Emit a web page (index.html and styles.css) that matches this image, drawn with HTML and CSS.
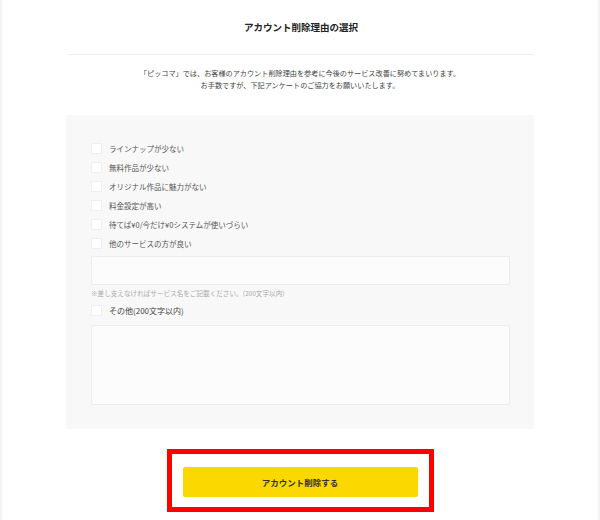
FILE: index.html
```html
<!DOCTYPE html>
<html lang="ja">
<head>
<meta charset="utf-8">
<title>アカウント削除理由の選択</title>
<link rel="stylesheet" href="styles.css">
</head>
<body>
<div class="page">
  <div class="container">
    <header class="header">
      <h1 class="title">アカウント削除理由の選択</h1>
    </header>
    <div class="desc">
      <p>「ピッコマ」では、お客様のアカウント削除理由を参考に今後のサービス改善に努めてまいります。</p>
      <p>お手数ですが、下記アンケートのご協力をお願いいたします。</p>
    </div>
    <form class="panel">
      <label class="row"><span class="box"></span><span class="label">ラインナップが少ない</span></label>
      <label class="row"><span class="box"></span><span class="label">無料作品が少ない</span></label>
      <label class="row"><span class="box"></span><span class="label">オリジナル作品に魅力がない</span></label>
      <label class="row"><span class="box"></span><span class="label">料金設定が高い</span></label>
      <label class="row"><span class="box"></span><span class="label">待てば¥0/今だけ¥0システムが使いづらい</span></label>
      <label class="row"><span class="box"></span><span class="label">他のサービスの方が良い</span></label>
      <div class="input"></div>
      <p class="note">※差し支えなければサービス名をご記載ください。(200文字以内)</p>
      <label class="row row-other"><span class="box"></span><span class="label label-other">その他(200文字以内)</span></label>
      <div class="textarea"></div>
    </form>
    <div class="action">
      <div class="highlight">
        <button type="button" class="btn">アカウント削除する</button>
      </div>
    </div>
  </div>
</div>
</body>
</html>
```

FILE: styles.css
```css
* { box-sizing: border-box; }
html, body { margin: 0; padding: 0; background: #fff; }
body {
  font-family: "Noto Sans CJK JP", "Noto Sans", sans-serif;
  color: #333;
}
.page {
  min-height: 520px;
  border-left: 2px solid #f3f3f3;
  border-right: 2px solid #f3f3f3;
}
.container {
  width: 468px;
  margin: 0 auto;
  display: flex;
  flex-direction: column;
}
.header {
  padding: 20px 0 20px;
  border-bottom: 1px solid #eeeeee;
  margin-left: 2px;
}
.title {
  margin: 0;
  font-size: 9.5px;
  line-height: 14px;
  font-weight: 700;
  text-align: center;
  color: #222;
}
.desc {
  margin-top: 12px;
  text-align: center;
  font-size: 7.15px;
  line-height: 12px;
  color: #444;
}
.desc p { margin: 0; }
.panel {
  margin: 24px 0 0;
  background: #f8f8f8;
  padding: 28px 24px 24px 25px;
  display: flex;
  flex-direction: column;
}
.row {
  display: flex;
  align-items: center;
  height: 11px;
  gap: 7px;
}
.row + .row { margin-top: 8px; }
.box {
  width: 11px;
  height: 11px;
  background: #fff;
  border: 1px solid #efefef;
  flex: none;
}
.label {
  font-size: 7.5px;
  line-height: 11px;
  color: #555;
}
.label-other { font-size: 8px; color: #444; }
.input {
  margin-top: 7px;
  height: 29px;
  background: #fcfcfc;
  border: 1px solid #ececec;
  border-radius: 2px;
}
.note {
  margin: 3px 0 0;
  font-size: 6.6px;
  line-height: 10px;
  color: #aaa;
}
.row-other { margin-top: 7px; }
.textarea {
  margin-top: 9px;
  height: 80px;
  background: #fcfcfc;
  border: 1px solid #ececec;
  border-radius: 2px;
}
.action {
  display: flex;
  justify-content: center;
  margin-top: 20px;
}
.highlight {
  width: 267px;
  border: 5px solid #ff0000;
  padding: 13px 11px 10px;
}
.btn {
  display: block;
  width: 100%;
  height: 30px;
  border: 0;
  border-radius: 2px;
  background: #fbd900;
  font-family: "Noto Sans CJK JP", "Noto Sans", sans-serif;
  font-size: 8.5px;
  font-weight: 700;
  color: #333;
  padding: 0;
}
```
